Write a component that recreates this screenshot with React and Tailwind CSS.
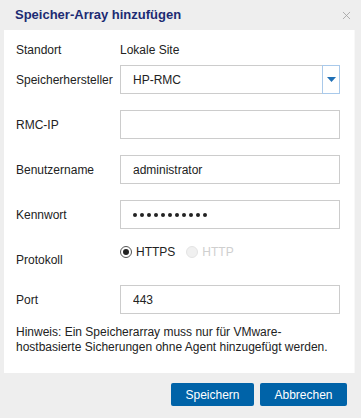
import { X } from 'lucide-react';

const labelCls = 'w-[104px] shrink-0 text-[12px] leading-[14px] text-[#222]';
const inputCls =
  'h-[29px] w-[220px] border border-[#cccccc] bg-white px-3 text-[12px] text-[#222] outline-none';

function Row({ label, children, className = '' }) {
  return (
    <div className={`flex items-center ${className}`}>
      <div className={labelCls}>{label}</div>
      {children}
    </div>
  );
}

export default function App() {
  return (
    <div
      className="flex h-[418px] w-[361px] flex-col bg-[#eeeeee]"
      style={{ fontFamily: '"Liberation Sans", Arial, sans-serif' }}
    >
      <div className="flex h-[30px] shrink-0 items-center justify-between pl-[15px] pr-[8px]">
        <h1 className="text-[13px] font-bold leading-[16px] text-[#1c2b73]">Speicher-Array hinzufügen</h1>
        <X className="h-[13px] w-[13px] text-[#a0a0a0]" strokeWidth={1.5} />
      </div>

      <div className="ml-1 mr-[6px] flex h-[343px] shrink-0 flex-col border-r border-[#f8f8f8] bg-white pl-3 pr-3 pt-[13px]">
        <Row label="Standort">
          <div className="text-[12px] leading-[14px] text-[#222]">Lokale Site</div>
        </Row>

        <Row label="Speicherhersteller" className="mt-[8px]">
          <div className="flex h-[29px] w-[220px] items-stretch border border-[#cccccc]">
            <div className="flex flex-1 items-center px-3 text-[12px] text-[#222]">HP-RMC</div>
            <div className="-my-px -mr-px flex w-[18px] items-center justify-center border border-[#a9c9ea]">
              <svg width="9" height="5" viewBox="0 0 9 5">
                <path d="M0 0 H9 L4.5 5 Z" fill="#1f6fb5" />
              </svg>
            </div>
          </div>
        </Row>

        <Row label="RMC-IP" className="mt-[16px]">
          <input className={inputCls} defaultValue="" />
        </Row>

        <Row label="Benutzername" className="mt-[16px]">
          <input className={inputCls} defaultValue="administrator" />
        </Row>

        <Row label="Kennwort" className="mt-[16px]">
          <div className={`${inputCls} flex items-center gap-[3px]`}>
            {Array.from({ length: 11 }).map((_, i) => (
              <span key={i} className="h-[4px] w-[4px] rounded-full bg-[#222]" />
            ))}
          </div>
        </Row>

        <div className="mt-[16px] flex items-start">
          <div className={`${labelCls} pt-[8px]`}>Protokoll</div>
          <div className="flex h-[14px] items-center gap-[4px] text-[12px] leading-[14px]">
            <span className="flex h-[12px] w-[12px] items-center justify-center rounded-full border border-[#555] bg-white">
              <span className="h-[6px] w-[6px] rounded-full bg-[#222]" />
            </span>
            <span className="text-[#222]">HTTPS</span>
            <span className="ml-[7px] h-[12px] w-[12px] rounded-full border border-[#e4e4e4] bg-[#f0f0f0]" />
            <span className="text-[#cfcfcf]">HTTP</span>
          </div>
        </div>

        <Row label="Port" className="mt-[18px]">
          <input className={inputCls} defaultValue="443" />
        </Row>

        <p className="mt-[11px] text-[12px] leading-[15px] text-[#222]">
          Hinweis: Ein Speicherarray muss nur für VMware-
          <br />
          hostbasierte Sicherungen ohne Agent hinzugefügt werden.
        </p>
      </div>

      <div className="ml-1 mr-[6px] flex justify-end gap-[6px] pr-[8px] pt-[10px]">
        <button className="h-[23px] w-[83px] rounded-[2px] bg-[#0063a8] text-[12px] text-white">Speichern</button>
        <button className="h-[23px] w-[87px] rounded-[2px] bg-[#0063a8] text-[12px] text-white">Abbrechen</button>
      </div>
    </div>
  );
}
